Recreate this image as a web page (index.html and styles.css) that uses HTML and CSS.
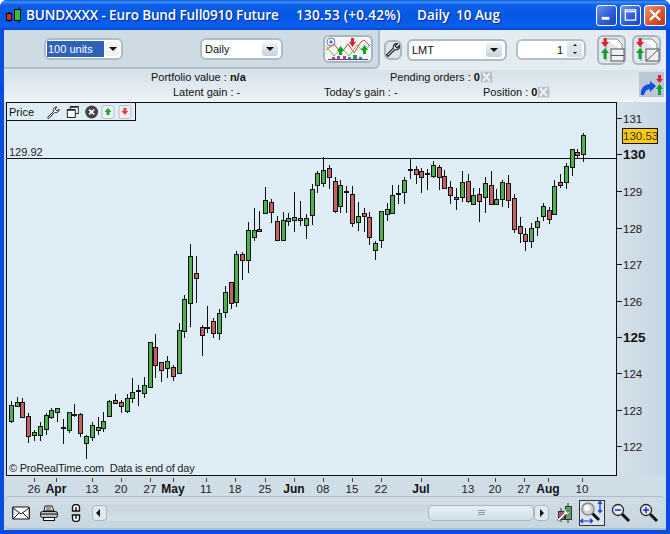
FILE: index.html
```html
<!DOCTYPE html>
<html lang="en">
<head>
<meta charset="utf-8">
<title>BUNDXXXX</title>
<link rel="stylesheet" href="styles.css">
</head>
<body>
<div class="window">
  <header class="titlebar">
    <svg class="logo" width="16" height="16" viewBox="0 0 16 16"><path d="M13 0v3M3 5v2M3 13v2M13 13v3" stroke="#000" fill="none"/><rect x="0.5" y="6.5" width="5" height="7" fill="#e02020" stroke="#000"/><rect x="8.5" y="2.5" width="6" height="11" fill="#2fc03a" stroke="#000"/></svg>
    <span class="t-name">BUNDXXXX - Euro Bund Full0910 Future</span>
    <span class="t-price">130.53 (+0.42%)</span>
    <span class="t-period">Daily</span>
    <span class="t-date">10 Aug</span>
    <div class="winbtns">
      <button class="wb wb-blue"><svg width="20" height="20" viewBox="0 0 20 20"><rect x="5" y="12" width="8" height="3" fill="#fff"/></svg></button>
      <button class="wb wb-blue"><svg width="20" height="20" viewBox="0 0 20 20"><path d="M4.5 4.5h11v11h-11z M4.5 6.5h11" fill="none" stroke="#fff" stroke-width="1.3"/></svg></button>
      <button class="wb wb-red"><svg width="20" height="20" viewBox="0 0 20 20"><path d="M5 5l10 10M15 5L5 15" stroke="#fff" stroke-width="2.4" fill="none"/></svg></button>
    </div>
  </header>

  <div class="client">
    <div class="toprow">
      <div class="panel">
        <div class="select sel-units"><span class="sel-val sel-active">100 units</span><i class="arrow"></i></div>
        <div class="select sel-daily"><span class="sel-val">Daily</span><i class="arrow"></i></div>
        <button class="chartbtn">
          <svg width="46" height="24" viewBox="0 0 46 24">
            <circle cx="6" cy="5" r="4" fill="#fff" stroke="#5a80c8"/>
            <path d="M6 3l2 2-2 2-2-2z" fill="#4a6fc0"/>
            <path d="M1 13l8-6 7 9 7-9 6 9 7-11 3-2 6 6" fill="none" stroke="#d84040"/>
            <path d="M1 9l8 10 8-8 7 8 8-11 7 7 5-6" fill="none" stroke="#80b850"/>
            <path d="M14 18v-4h-2l3.500-5 3.500 5h-2v4z M38 17v-4h-2l3.500-5 3.500 5h-2v4z" fill="#14a020"/>
            <path d="M26 1v4h-2l3.500 5 3.500-5h-2V1z" fill="#e02030"/>
            <path d="M3 22.500h40" stroke="#7030a0"/>
            <path d="M7 20h3v2H7z M12 19h3v3h-3z M18 19h3v3h-3z" fill="#b04090"/>
            <path d="M23 20h3v2h-3z M28 18h4v4h-4z M34 20h3v2h-3z" fill="#14a050"/>
          </svg>
        </button>
      </div>
      <div class="tools">
        <button class="wrenchbtn">
          <svg width="16" height="16" viewBox="0 0 16 16"><path d="M1.500 13l7-7c-1-2.500 1-5 4-4.500L10 4l2 2 2.500-2.500c.5 3-2 5-4.500 4l-7 7z" fill="#fff" stroke="#222" stroke-width="1.100"/></svg>
        </button>
        <div class="select sel-lmt"><span class="sel-val">LMT</span><i class="arrow"></i></div>
        <div class="spinner"><span class="spin-val">1</span><span class="spin-btns"><i class="up"></i><i class="down"></i></span></div>
        <button class="ordbtn">
          <svg width="26" height="28" viewBox="0 0 26 28">
            <path d="M7 3h11l5 5v6" fill="#fff" stroke="#888"/><path d="M7 3v22" stroke="#888"/>
            <rect x="12" y="13" width="13" height="12" fill="#edf1f3" stroke="#555"/><path d="M12 19.500h13" stroke="#555"/>
            <path d="M4.500 2h3v4h2.500L6 11 2 6h2.500z" fill="#e02030"/><path d="M6 12l4 5H7.500v6h-3v-6H2z" fill="#10a030"/>
          </svg>
        </button>
        <button class="ordbtn">
          <svg width="26" height="28" viewBox="0 0 26 28">
            <path d="M7 3h11l5 5v6" fill="#fff" stroke="#888"/><path d="M7 3v22" stroke="#888"/>
            <rect x="12" y="13" width="13" height="12" fill="#edf1f3" stroke="#555"/><path d="M12 25l13-12" stroke="#555"/>
            <path d="M4.500 2h3v4h2.500L6 11 2 6h2.500z" fill="#e02030"/><path d="M6 12l4 5H7.500v6h-3v-6H2z" fill="#10a030"/>
          </svg>
        </button>
      </div>
    </div>

    <div class="info">
      <div class="info-rows">
        <div class="irow">
          <span class="pv">Portfolio value : <b>n/a</b></span>
          <span class="po">Pending orders : <b>0</b><svg class="xbox" width="13" height="12" viewBox="0 0 13 12"><rect x="0.500" y="0.500" width="12" height="11" fill="#b9c0c5" stroke="#d8dde0"/><path d="M3 2l7 8M10 2l-7 8" stroke="#eef1f2" stroke-width="2"/></svg></span>
        </div>
        <div class="irow">
          <span class="lg">Latent gain : -</span>
          <span class="tg">Today's gain : -</span>
          <span class="ps">Position : <b>0</b><svg class="xbox" width="13" height="12" viewBox="0 0 13 12"><rect x="0.500" y="0.500" width="12" height="11" fill="#b9c0c5" stroke="#d8dde0"/><path d="M3 2l7 8M10 2l-7 8" stroke="#eef1f2" stroke-width="2"/></svg></span>
        </div>
      </div>
      <div class="flip">
        <svg width="25" height="25" viewBox="0 0 25 25">
          <path d="M2 23c-1-6 3-11 9-11V9l6 5-6 6v-3c-3 0-5 2-6 6z" fill="#1450e0"/>
          <path d="M19 3h3v4h2l-3.500 4L17 7h2z" fill="#e02030"/>
          <path d="M20.500 12l3.500 5h-2v6h-3v-6h-2z" fill="#10a030"/>
        </svg>
      </div>
    </div>

    <div class="main">
      <div class="chart">
        <svg id="plot" class="plot" width="611" height="374" viewBox="6 102 611 374">
          <text class="lbl" x="9" y="156">129.92</text>
          <text class="lbl lbl-tight" x="9" y="472">© ProRealTime.com&#160; Data is end of day</text>
        </svg>
        <div class="legend">
          <span class="leg-name">Price</span>
          <svg class="leg-icons" width="90" height="16" viewBox="0 0 90 16">
            <path d="M1.500 13.500l6-6c-1-2.500 1-5 3.500-4.500L9 5l2 2 2-2c.5 2.500-2 4.500-4.500 3.500l-5.500 6z" fill="#fff" stroke="#222"/>
            <rect x="24.500" y="2.500" width="8" height="7" fill="#fff" stroke="#222"/><rect x="21.500" y="5.500" width="8" height="8" fill="#fff" stroke="#222"/><path d="M25 3h7M22 6h7" stroke="#222" stroke-width="1.500"/>
            <circle cx="46" cy="8" r="6.500" fill="#444"/><path d="M43.500 5.500l5 5M48.500 5.500l-5 5" stroke="#fff" stroke-width="1.800"/>
            <rect x="56.500" y="1.500" width="12" height="13" rx="2" fill="#eef5ef" stroke="#b4bec4"/><path d="M62.500 4l3.500 4h-2v3h-3V8h-2z" fill="#20a040"/>
            <rect x="73.500" y="1.500" width="12" height="13" rx="2" fill="#f5eeee" stroke="#b4bec4"/><path d="M78 4h3v3h2l-3.500 4L76 7h2z" fill="#e04050"/>
          </svg>
        </div>
      </div>
      <div class="yaxis">
        <svg id="yax" width="49" height="374" viewBox="617 102 49 374"></svg>
        <div class="pricetag">130.53</div>
      </div>
    </div>

    <div class="xaxis"><svg id="xax" width="662" height="20" viewBox="4 476 662 20"></svg></div>

    <div class="bottombar">
      <svg class="bi bi-mail" width="18" height="14" viewBox="0 0 18 14"><rect x="0.700" y="1" width="16.600" height="12" rx="1" fill="#fff" stroke="#111" stroke-width="1.200"/><path d="M1 2l8 6 8-6M1 13l6-6M17 13l-6-6" fill="none" stroke="#111"/></svg>
      <svg class="bi bi-print" width="18" height="16" viewBox="0 0 18 16"><path d="M5 1h7l2 5H4z" fill="#fff" stroke="#111"/><rect x="0.500" y="6.500" width="17" height="6" rx="2" fill="#b9bfc4" stroke="#111"/><path d="M1 9h16" stroke="#111"/><rect x="3.500" y="12.500" width="11" height="3" fill="#fff" stroke="#111"/><path d="M6 3h5M6 5h6" stroke="#333"/></svg>
      <svg class="bi bi-link" width="10" height="18" viewBox="0 0 10 18"><path d="M1.500 7V3.500a3.500 3 0 0 1 7 0V7zM1.500 11v3.500a3.500 3 0 0 0 7 0V11zM5 3v4M5 11v4" fill="#fff" stroke="#111" stroke-width="1.400"/></svg>
      <div class="scrollbar">
        <button class="sb-btn"><i class="tri-left"></i></button>
        <div class="sb-track"><div class="sb-thumb"><span class="grip"></span></div></div>
        <button class="sb-btn"><i class="tri-right"></i></button>
      </div>
      <svg class="bi bi-cfg" width="18" height="20" viewBox="0 0 18 20"><path d="M12 0v4M12 16v4M5 5v3M5 16v3" stroke="#334"/><rect x="9.500" y="3.500" width="6" height="13" fill="#58a45c" stroke="#333"/><rect x="2.500" y="8.500" width="6" height="8" fill="#a86068" stroke="#333"/><path d="M1 17l7-7c-.5-2.500 1.500-4.500 4-4l-2 2 1.500 1.500 2-2c.5 2.500-1.500 4.500-4 4l-7 7z" fill="#fff" stroke="#555" stroke-width="0.700"/></svg>
      <div class="zoombox">
        <svg width="24" height="24" viewBox="0 0 24 24"><path d="M11 11l8 8" stroke="#111" stroke-width="3"/><circle cx="8" cy="8" r="6" fill="#d0d3d6" stroke="#888" stroke-width="1.500"/><circle cx="7" cy="7" r="3" fill="#fafafa"/><path d="M20 1v10M18 3l2-2.500L22 3M18 9l2 2.500L22 9M1 20h11M3 18l-2.500 2L3 22M10 18l2.500 2-2.500 2" fill="none" stroke="#1030d0" stroke-width="1.200"/></svg>
      </div>
      <svg class="bi bi-zm" width="20" height="20" viewBox="0 0 20 20"><path d="M11 11l7 7" stroke="#111" stroke-width="3"/><circle cx="7" cy="7" r="5.500" fill="#e8edf0" stroke="#222" stroke-width="1.300"/><path d="M4 7h6" stroke="#1030d0" stroke-width="1.500"/></svg>
      <svg class="bi bi-zp" width="20" height="20" viewBox="0 0 20 20"><path d="M11 11l7 7" stroke="#111" stroke-width="3"/><circle cx="7" cy="7" r="5.500" fill="#e8edf0" stroke="#222" stroke-width="1.300"/><path d="M4 7h6M7 4v6" stroke="#1030d0" stroke-width="1.500"/></svg>
    </div>
  </div>
</div>
<script src="chart.js"></script>
</body>
</html>
```

FILE: styles.css
```css
* { box-sizing: border-box; }
html, body { margin: 0; padding: 0; background: #fff; }
body { font-family: "Liberation Sans", Arial, sans-serif; font-size: 11px; color: #111; }
button { padding: 0; margin: 0; font: inherit; }

.window {
  width: 670px; height: 534px; overflow: hidden;
  display: flex; flex-direction: column;
  background: #0a4be0; padding: 0 4px 4px;
  border-radius: 7px 7px 0 0;
}

.titlebar {
  height: 30px; margin: 0 -4px; padding: 0 4px 0 6px;
  display: flex; align-items: center; flex: none;
  background: linear-gradient(#0a58e0 0, #3d8df5 2px, #0c5fe6 5px, #0557e4 16px, #0a5ff0 26px, #0648c8 30px);
  color: #fff; font-family: "Open Sans", "Liberation Sans", sans-serif; font-weight: 600; font-size: 13.500px;
  text-shadow: 1px 1px 1px #0a2a90;
}
.logo { margin-right: 4px; flex: none; }
.t-name { width: 270px; white-space: nowrap; letter-spacing: -0.12px; }
.t-price { width: 121px; white-space: nowrap; letter-spacing: 0.28px; }
.t-period { width: 39px; }
.t-date { white-space: nowrap; }
.winbtns { margin-left: auto; display: flex; gap: 3px; }
.wb { width: 21px; height: 21px; border: 1px solid #fff; border-radius: 3px; display: flex; align-items: center; justify-content: center; }
.wb-blue { background: linear-gradient(135deg, #6d93ee, #2a58d8 60%, #1d48c4); }
.wb-red { background: linear-gradient(135deg, #ec9478, #d8532c 60%, #b8371a); width: 22px; }

.client {
  flex: 1; display: flex; flex-direction: column; min-height: 0;
  background: #cbdae4;
}

.toprow { height: 40px; display: flex; flex: none; background: #e4ecf1; align-items: flex-start; }
.panel {
  width: 376px; height: 39px; flex: none;
  display: flex; align-items: center;
  padding-left: 40px;
  background: #cedbe4;
  border: solid #aebdc8; border-width: 0 2px 2px 0;
  border-radius: 0 0 6px 0;
  box-shadow: 0 1px 0 #dfe8ee;
}
.tools { display: flex; align-items: center; height: 39px; margin-left: 4px; }

.select {
  height: 22px; background: #fff; border: 2px solid #aebcc6; border-radius: 6px;
  display: flex; align-items: center; padding: 0 3px 0 1px;
}
.sel-val { flex: 1; font-size: 11px; line-height: 16px; padding-left: 1px; }
.sel-active { background: #2e62b8; color: #fff; margin-right: 1px; height: 16px; }
.sel-units { width: 79px; margin-right: 77px; padding-right: 2px; }
.sel-units .arrow { width: 14px; }
.sel-daily { width: 83px; margin-right: 41px; }
.sel-daily .sel-val { padding-left: 2px; }
.sel-lmt { width: 100px; margin: 0 9px 0 5px; }
.sel-lmt .sel-val { padding-left: 2px; }
.arrow {
  width: 16px; height: 14px; flex: none; position: relative; border-radius: 3px;
  background: linear-gradient(#f1f4f6, #c5d1da);
}
.sel-active + .arrow { background: #f0f3f5; }
.arrow::after {
  content: ""; position: absolute; left: 4px; top: 5px;
  border: 4px solid transparent; border-top: 4px solid #111; border-bottom: 0;
}

.chartbtn {
  width: 50px; height: 28px; margin-left: -1px; display: flex; align-items: center; justify-content: center;
  background: #f2f6f2; border: 2px solid #a7b5c0; border-radius: 6px;
}
.chartbtn svg { flex: none; }
.wrenchbtn {
  width: 18px; height: 20px; border: 2px solid #aab8c2; border-radius: 6px;
  background: #dde6ec; display: flex; align-items: center; justify-content: center;
}
.wrenchbtn svg { flex: none; }
.spinner {
  width: 70px; height: 21px; background: #fff; border: 2px solid #b3c0c9; border-radius: 6px;
  display: flex; align-items: center; justify-content: flex-end; margin-right: 11px; padding-right: 2px;
}
.spin-val { font-size: 11px; margin-right: 4px; }
.spin-btns { width: 15px; height: 15px; display: flex; flex-direction: column; background: linear-gradient(#e6ecf0, #d4dee5); }
.spin-btns i { flex: 1; position: relative; }
.spin-btns i::after { content: ""; position: absolute; left: 6px; top: 2px; border: 2px solid transparent; }
.spin-btns .up::after { border-bottom-color: #111; border-top: 0; }
.spin-btns .down::after { border-top-color: #111; border-bottom: 0; }
.ordbtn {
  width: 29px; height: 30px; margin-right: 6px; background: #dfe7ec; border: 2px solid #aab8c2; border-radius: 6px;
  display: flex; align-items: center; justify-content: center;
}
.ordbtn svg { flex: none; }

.info {
  height: 32px; flex: none; display: flex;
  background: linear-gradient(#d6e1e9, #e9f0f5 85%, #eef4f7);
}
.info-rows { flex: 1; }
.irow { height: 15px; line-height: 15px; display: flex; white-space: nowrap; font-size: 11px; }
.irow b { font-weight: 700; }
.pv { margin-left: 147px; width: 239px; }
.lg { margin-left: 169px; width: 151px; }
.tg { width: 159px; }
.xbox { vertical-align: -2px; margin-left: 0; }
.flip { width: 25px; height: 25px; margin: 2px 2px 0 0; background: #b9c8d3; flex: none; }

.main { height: 374px; display: flex; flex: none; padding-left: 2px; }
.chart { width: 611px; height: 374px; position: relative; flex: none; background: #dfeef6; }
.plot { display: block; }
.lbl { font-size: 11px; fill: #222; font-family: "Liberation Sans", Arial, sans-serif; }
.lbl-tight { letter-spacing: -0.22px; }
.legend {
  position: absolute; left: 1px; top: 1px; width: 129px; height: 18px;
  border: 1px solid #111; border-width: 0 1px 1px 0;
  background: #dfeef6; display: flex; align-items: center; padding-left: 2px;
}
.leg-name { font-size: 11px; width: 37px; }
.yaxis { width: 49px; position: relative; background: linear-gradient(90deg, #d3e0e8, #c6d6e1); }
.yaxis svg { display: block; }
.ylab { font-size: 11.500px; fill: #222; font-family: "Liberation Sans", Arial, sans-serif; }
.ylab-b { font-size: 13.500px; font-weight: 700; fill: #111; }
.pricetag {
  position: absolute; left: 5px; top: 26px; width: 36px; height: 16px;
  background: #ffc90e; border: 1px solid #111; font-size: 11.500px; line-height: 14px; text-align: center; color: #333;
}

.xaxis { height: 20px; flex: none; background: #cfdde6; }
.xaxis svg { display: block; }
.xlab { font-size: 11.500px; fill: #222; font-family: "Liberation Sans", Arial, sans-serif; text-anchor: middle; }
.xlab-b { font-size: 12px; font-weight: 700; fill: #111; }

.bottombar {
  height: 34px; flex: none; display: flex; align-items: center;
  padding-left: 8px; position: relative;
  background: linear-gradient(#cfdce5, #c7d6e0);
  border: solid #aebdc8; border-width: 1px 0 2px;
  border-radius: 6px 6px 0 6px;
}
.bi { flex: none; }
.bi-mail { margin-right: 10px; }
.bi-print { margin-right: 13px; }
.bi-link { margin-right: 11px; }
.bi-cfg { margin: 0 5px 0 7px; }
.scrollbar { display: flex; width: 457px; height: 16px; align-items: stretch; flex: none; }
.sb-btn { width: 15px; flex: none; background: #e0e9ee; border: 1px solid #a9b7c1; border-radius: 4px; position: relative; }
.tri-left, .tri-right { position: absolute; top: 3px; border: 4px solid transparent; }
.tri-left { left: 3px; border-right: 4px solid #111; border-left: 0; }
.tri-right { left: 5px; border-left: 4px solid #111; border-right: 0; }
.sb-track { flex: 1; background: linear-gradient(#c8d5de, #d4e0e8); display: flex; justify-content: flex-end; }
.sb-thumb {
  width: 106px; background: linear-gradient(#e8f0f5, #d0dee7); border: 1px solid #a9b7c1; border-radius: 5px;
  display: flex; align-items: center; justify-content: center;
}
.grip { width: 7px; height: 5px; border: solid #8a99a4; border-width: 1px 0; position: relative; }
.grip::after { content: ""; position: absolute; left: 0; right: 0; top: 1px; height: 1px; background: #8a99a4; }
.zoombox {
  width: 26px; height: 26px; border: 1px solid #333; margin-right: 6px; flex: none;
  background: #dbe5ec; display: flex; align-items: center; justify-content: center;
}
.zoombox svg { flex: none; }
.bi-zm { margin-right: 8px; }
```

FILE: chart.js
```js
// [x, wickTop, wickBottom, bodyTop, bodyBottom, colour]
var candles = [
[11.5,401,423,405,421,'g'],[17.5,397,407,402,406,'g'],[22.5,398,417,402,417,'r'],[28.5,413,443,416,436,'r'],
[34.5,430,441,432,435,'g'],[40.5,422,441,426,435,'g'],[46.5,413,435,415,429,'g'],[51.5,408,419,410,417,'g'],
[57.5,408,422,408,412,'g'],[63.5,419,444,428,428,'d'],[69.5,412,433,412,430,'g'],[74.5,404,417,415,416,'d'],
[80.5,413,437,414,433,'r'],[86.5,435,459,436,443,'g'],[92.5,422,441,425,437,'g'],[98.5,417,435,427,430,'g'],
[103.5,412,432,421,428,'g'],[109.5,400,417,401,416,'g'],[115.5,394,404,400,403,'r'],[121.5,400,413,402,406,'r'],
[127.5,394,413,398,411,'g'],[132.5,378,403,392,398,'g'],[138.5,385,406,391,391,'d'],[144.5,377,398,385,393,'g'],
[150.5,342,388,342,387,'g'],[155.5,334,378,347,365,'r'],[161.5,362,382,362,370,'r'],[167.5,356,378,361,368,'g'],
[173.5,365,381,367,376,'r'],[179.5,323,373,330,373,'g'],[184.5,295,338,299,331,'g'],[190.5,244,327,256,303,'g'],
[196.5,256,303,273,278,'r'],[202.5,325,356,327,335,'r'],[207.5,306,333,328,328,'d'],[213.5,318,338,321,333,'r'],
[219.5,309,340,313,333,'g'],[225.5,286,318,292,312,'g'],[231.5,282,309,282,303,'r'],[236.5,251,307,254,302,'g'],
[242.5,252,280,254,260,'r'],[248.5,222,273,230,260,'g'],[254.5,208,241,230,237,'g'],[259.5,211,232,229,231,'r'],
[265.5,187,214,200,213,'g'],[271.5,199,223,202,212,'r'],[277.5,216,241,221,240,'r'],[283.5,212,241,220,240,'g'],
[288.5,213,226,218,221,'g'],[294.5,192,232,217,220,'g'],[300.5,201,226,218,220,'r'],[306.5,214,239,218,225,'g'],
[312.5,184,225,189,215,'g'],[317.5,171,193,173,185,'g'],[323.5,157,187,170,183,'g'],[329.5,165,189,168,177,'r'],
[335.5,177,213,181,211,'r'],[340.5,180,213,185,206,'g'],[346.5,186,213,192,193,'d'],[352.5,186,227,194,223,'r'],
[358.5,202,231,216,222,'g'],[364.5,208,232,213,216,'r'],[369.5,212,245,217,237,'r'],[375.5,241,260,243,250,'g'],
[381.5,211,248,211,240,'g'],[387.5,203,221,209,214,'g'],[392.5,185,214,195,213,'g'],[398.5,185,204,194,194,'d'],
[404.5,177,204,180,192,'g'],[410.5,158,179,170,170,'d'],[416.5,166,184,169,174,'r'],[421.5,168,193,171,177,'r'],
[427.5,169,190,174,175,'d'],[433.5,161,178,165,176,'g'],[439.5,165,190,167,177,'r'],[444.5,170,188,176,188,'r'],
[450.5,181,204,187,195,'r'],[456.5,188,210,197,199,'g'],[462.5,171,202,182,197,'g'],[468.5,174,203,181,201,'r'],
[473.5,188,204,195,204,'g'],[479.5,188,222,194,201,'r'],[485.5,177,213,183,197,'g'],[491.5,171,204,185,204,'r'],
[496.5,189,205,199,204,'g'],[502.5,180,207,182,199,'g'],[508.5,175,208,183,200,'r'],[514.5,194,233,198,229,'r'],
[520.5,217,243,226,233,'r'],[525.5,228,251,234,241,'r'],[531.5,223,248,228,241,'g'],[537.5,217,236,221,227,'g'],
[543.5,203,221,206,216,'g'],[549.5,207,224,210,219,'r'],[554.5,180,215,186,214,'g'],[560.5,174,188,182,185,'r'],
[566.5,163,189,166,182,'g'],[572.5,149,176,149,167,'g'],[577.5,149,159,152,155,'r'],[583.5,133,162,135,154,'g']
];
var NS = 'http://www.w3.org/2000/svg';
function el(parent, name, attrs, text) {
  var n = document.createElementNS(NS, name);
  for (var k in attrs) n.setAttribute(k, attrs[k]);
  if (text) n.textContent = text;
  parent.appendChild(n);
  return n;
}
var plot = document.getElementById('plot');
el(plot, 'path', { d: 'M7 158.5H617', stroke: '#111', fill: 'none' });
candles.forEach(function (c) {
  el(plot, 'path', { d: 'M' + c[0] + ' ' + c[1] + 'V' + c[2], stroke: '#111', fill: 'none' });
  if (c[5] === 'd') {
    el(plot, 'rect', { x: c[0] - 2.5, y: c[3] - 1, width: 5, height: 2, fill: '#111' });
  } else {
    el(plot, 'rect', {
      x: c[0] - 2, y: c[3] + 0.5, width: 4, height: Math.max(c[4] - c[3], 1),
      fill: c[5] === 'g' ? '#4fb04f' : '#c46060', stroke: '#111'
    });
  }
});
el(plot, 'rect', { x: 6.5, y: 102.5, width: 610, height: 373, fill: 'none', stroke: '#111' });

var yax = document.getElementById('yax');
[[131,118],[130,154.5,1],[129,191],[128,228],[127,264],[126,301],[125,337,1],[124,373],[123,410],[122,446]].forEach(function (t) {
  var y = Math.floor(t[1]) + 0.5;
  el(yax, 'path', { d: 'M617 ' + y + 'H622', stroke: '#111' });
  el(yax, 'text', { x: 623, y: y + 4.5, 'class': t[2] ? 'ylab ylab-b' : 'ylab' }, String(t[0]));
});

var xax = document.getElementById('xax');
[['26',34],['Apr',56,1],['13',92],['20',121],['27',150],['May',173,1],['11',206],['18',235],['25',265],['Jun',294,1],['08',323],
 ['15',352],['22',381],['Jul',421,1],['13',468],['20',495],['27',524],['Aug',548,1],['10',582]].forEach(function (t) {
  el(xax, 'path', { d: 'M' + (t[1] + 0.5) + ' 478V482', stroke: '#444' });
  el(xax, 'text', { x: t[1], y: 493, 'class': t[2] ? 'xlab xlab-b' : 'xlab' }, t[0]);
});
```
